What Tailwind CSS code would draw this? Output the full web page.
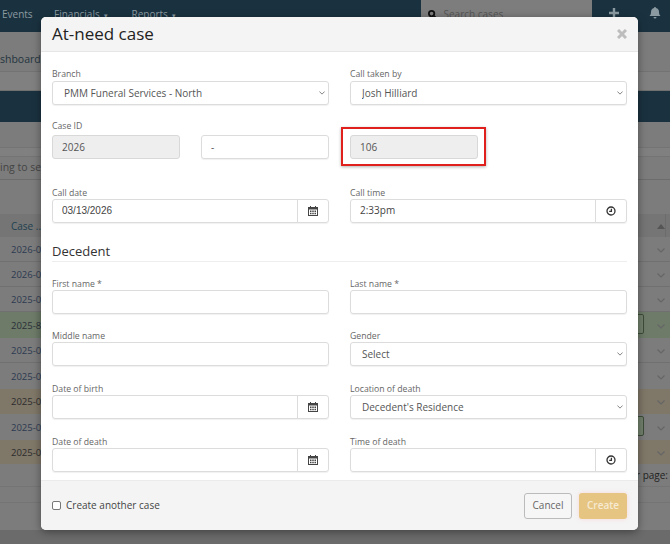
<!DOCTYPE html>
<html lang="en">
<head>
    <meta charset="UTF-8">
    <title>At-need case</title>
    <script src="https://cdn.jsdelivr.net/npm/@tailwindcss/browser@4"></script>
</head>
<body class="font-['Open_Sans',sans-serif] bg-[#7c7c7c] overflow-hidden">
<div class="relative w-[670px] h-[544px] overflow-hidden bg-[#7c7c7c]">

    <!-- page behind the modal -->
    <div class="h-8 bg-[#1a3240] flex items-start text-[10px] text-[#8b9aa1]">
        <span class="ml-[2px] w-[52px] mt-[7px]">Events</span>
        <span class="w-[77.5px] mt-[7px]">Financials<span class="text-[7px] ml-[4px]">▾</span></span>
        <span class="w-[289px] mt-[7px]">Reports<span class="text-[7px] ml-[4px]">▾</span></span>
        <div class="w-[171px] h-7 bg-[#7d7d7d] flex items-center pl-[7px] gap-[7px] rounded-b-[2px]">
            <svg class="w-[9px] h-[9px]" viewBox="0 0 10 10" fill="none" stroke="#111" stroke-width="2"><circle cx="4" cy="4" r="3"/><path d="M6.5 6.5 9.5 9.5"/></svg>
            <span class="text-[#555]">Search cases</span>
        </div>
        <svg class="ml-[17px] mt-[8px] w-[10px] h-[10px]" viewBox="0 0 10 10" stroke="#8b9aa1" stroke-width="2.4"><path d="M5 0v10M0 5h10"/></svg>
        <svg class="ml-[30px] mt-[7px] w-3 h-3" viewBox="0 0 12 12" fill="#8b9aa1"><path d="M6 0a1 1 0 0 1 1 1c2 .4 3 2 3 4 0 2 .6 3 1.500 4H.5C1.400 8 2 7 2 5c0-2 1-3.600 3-4a1 1 0 0 1 1-1ZM4.500 10h3a1.500 1.500 0 0 1-3 0Z"/></svg>
    </div>
    <div class="h-10 flex items-end pb-[3px] text-[10.5px] text-[#23343e] border-b border-[#737373]">
        <span>shboard</span>
    </div>
    <div class="h-[19px] bg-[#808080] border-b border-[#707070]"></div>
    <div class="h-[31px] bg-[#1a3240]"></div>
    <div class="h-[25px]"></div>
    <div class="h-[10px] bg-[#808080] border-y border-[#747474]"></div>
    <div class="h-[23px] flex items-center text-[10.5px] text-[#444] border-b border-[#6c6c6c]">
        <span>ing to sea</span>
    </div>
    <div class="h-[34px]"></div>

    <!-- table -->
    <div class="h-[23px] relative bg-[#757575] flex items-center justify-between pl-[11px] pr-[5px] pt-[2px] text-[10px] text-[#22404f]">
        <span>Case ..</span>
        <svg class="w-[8px] h-[5px]" viewBox="0 0 8 5" fill="#555"><path d="M0 5 4 0l4 5Z"/></svg>
        <div class="absolute right-[4px] top-0 h-full border-l border-[#6c6c6c]"></div>
    </div>
    <div class="h-[25px] flex items-center justify-between pl-[11px] pr-[5px] pt-[2px] border-b border-[#707070] text-[9.5px] text-[#2c3a50]"><span>2026-03</span><svg class="w-[8px] h-[5px]" viewBox="0 0 8 5" fill="none" stroke="#666" stroke-width="1.200"><path d="M.5.5 4 4 7.500.5"/></svg></div>
    <div class="h-[25px] flex items-center justify-between pl-[11px] pr-[5px] pt-[2px] border-b border-[#707070] text-[9.5px] text-[#2c3a50]"><span>2026-03</span><svg class="w-[8px] h-[5px]" viewBox="0 0 8 5" fill="none" stroke="#666" stroke-width="1.200"><path d="M.5.5 4 4 7.500.5"/></svg></div>
    <div class="h-[25px] flex items-center justify-between pl-[11px] pr-[5px] pt-[2px] border-b border-[#707070] text-[9.5px] text-[#2c3a50]"><span>2025-02</span><svg class="w-[8px] h-[5px]" viewBox="0 0 8 5" fill="none" stroke="#666" stroke-width="1.200"><path d="M.5.5 4 4 7.500.5"/></svg></div>
    <div class="h-[26px] relative bg-[#6d7b68] flex items-center justify-between pl-[11px] pr-[5px] pt-[2px] text-[9.5px] text-[#2a3038]"><span>2025-84</span><svg class="w-[8px] h-[5px]" viewBox="0 0 8 5" fill="none" stroke="#666" stroke-width="1.200"><path d="M.5.5 4 4 7.500.5"/></svg><div class="absolute left-[636px] top-[2px] w-[8px] h-5 rounded-r-[2px] border border-[#3d4d38] bg-[#72806c]"></div></div>
    <div class="h-[25px] flex items-center justify-between pl-[11px] pr-[5px] pt-[2px] border-b border-[#707070] text-[9.5px] text-[#2c3a50]"><span>2025-02</span><svg class="w-[8px] h-[5px]" viewBox="0 0 8 5" fill="none" stroke="#666" stroke-width="1.200"><path d="M.5.5 4 4 7.500.5"/></svg></div>
    <div class="h-[26px] flex items-center justify-between pl-[11px] pr-[5px] pt-[2px] text-[9.5px] text-[#2c3a50]"><span>2025-02</span><svg class="w-[8px] h-[5px]" viewBox="0 0 8 5" fill="none" stroke="#666" stroke-width="1.200"><path d="M.5.5 4 4 7.500.5"/></svg></div>
    <div class="h-[25px] bg-[#7f7768] flex items-center justify-between pl-[11px] pr-[5px] pt-[2px] text-[9.5px] text-[#2c2c2c]"><span>2025-02</span><svg class="w-[8px] h-[5px]" viewBox="0 0 8 5" fill="none" stroke="#666" stroke-width="1.200"><path d="M.5.5 4 4 7.500.5"/></svg></div>
    <div class="h-[26px] relative flex items-center justify-between pl-[11px] pr-[5px] pt-[2px] text-[9.5px] text-[#2c3a50]"><span>2025-02</span><svg class="w-[8px] h-[5px]" viewBox="0 0 8 5" fill="none" stroke="#666" stroke-width="1.200"><path d="M.5.5 4 4 7.500.5"/></svg><div class="absolute left-[636px] top-[2px] w-[8px] h-5 rounded-r-[2px] border border-[#3d4d38] bg-[#72806c]"></div></div>
    <div class="h-[24px] bg-[#7f7768] flex items-center justify-between pl-[11px] pr-[5px] pt-[2px] text-[9.5px] text-[#2c2c2c]"><span>2025-02</span><svg class="w-[8px] h-[5px]" viewBox="0 0 8 5" fill="none" stroke="#666" stroke-width="1.200"><path d="M.5.5 4 4 7.500.5"/></svg></div>
    <div class="h-[23px] flex items-center justify-end pt-[1px] text-[10px] text-[#222] border-b border-[#747474]"><span class="mr-[2px]">Rows per page:</span></div>
    <div class="h-[16px] border-b border-[#747474]"></div>
    <div class="h-[27px]"></div>
    <div class="h-[14px] bg-[#6b6b6b]"></div>

    <!-- modal -->
    <div class="absolute left-[41px] top-[17px] w-[597px] h-[513px] bg-white rounded-[5px] shadow-[0_2px_8px_rgba(0,0,0,0.4)] overflow-hidden flex flex-col">
        <div class="h-[35px] shrink-0 bg-[#f4f4f4] border-b border-[#e6e6e6] flex items-center justify-between pl-[11px] pr-[11px]">
            <h1 class="text-[17px] text-[#222]">At-need case</h1>
            <svg class="w-[10px] h-[10px]" viewBox="0 0 10 10" stroke="#bdbdbd" stroke-width="3"><path d="M1 1l8 8M9 1l-8 8"/></svg>
        </div>

        <div class="flex-1 px-[11px] pt-[15px] text-[8.7px] text-[#666]">
            <div class="grid grid-cols-[277px_277px] gap-x-[21px]">
                <div>
                    <label class="block h-[14px] leading-[14px]">Branch</label>
                    <div class="relative h-6">
                        <select class="appearance-none w-full h-6 pl-[11px] border border-[#dcdcdc] rounded-[3px] bg-white text-[10px] text-[#555] shadow-[0_1px_1px_rgba(0,0,0,0.06)]"><option>PMM Funeral Services - North</option></select>
                        <svg class="absolute right-[4px] top-[10px] w-[6px] h-[4px]" viewBox="0 0 8 5" fill="none" stroke="#777" stroke-width="1.200"><path d="M.5.5 4 4 7.500.5"/></svg>
                    </div>
                </div>
                <div>
                    <label class="block h-[14px] leading-[14px]">Call taken by</label>
                    <div class="relative h-6">
                        <select class="appearance-none w-full h-6 pl-[11px] border border-[#dcdcdc] rounded-[3px] bg-white text-[10px] text-[#555] shadow-[0_1px_1px_rgba(0,0,0,0.06)]"><option>Josh Hilliard</option></select>
                        <svg class="absolute right-[4px] top-[10px] w-[6px] h-[4px]" viewBox="0 0 8 5" fill="none" stroke="#777" stroke-width="1.200"><path d="M.5.5 4 4 7.500.5"/></svg>
                    </div>
                </div>
            </div>

            <div class="mt-[14px] grid grid-cols-[128px_128px_128px] gap-x-[21px]">
                <div>
                    <label class="block h-[16px] leading-[14px]">Case ID</label>
                    <input value="2026" disabled class="w-full h-6 pl-[9px] border border-[#d8d8d8] rounded-[3px] bg-[#eeeeee] text-[10px] text-[#555]">
                </div>
                <div class="pt-[16px]">
                    <input value="-" class="w-full h-6 pl-[9px] border border-[#dcdcdc] rounded-[3px] bg-white text-[10px] text-[#555] shadow-[0_1px_1px_rgba(0,0,0,0.06)]">
                </div>
                <div class="pt-[16px] relative">
                    <input value="106" disabled class="w-full h-6 pl-[9px] border border-[#d8d8d8] rounded-[3px] bg-[#eeeeee] text-[10px] text-[#555]">
                    <div class="absolute left-[-9px] top-[8px] w-[145px] h-[39px] border-2 border-[#e0201c] shadow-[0_1px_3px_rgba(0,0,0,0.3)]"></div>
                </div>
            </div>

            <div class="mt-[25.5px] grid grid-cols-[277px_277px] gap-x-[21px]">
                <div>
                    <label class="block h-[14px] leading-[16px]">Call date</label>
                    <div class="flex h-6 border border-[#dcdcdc] rounded-[3px] shadow-[0_1px_1px_rgba(0,0,0,0.06)]">
                        <input value="03/13/2026" class="flex-1 min-w-0 pl-[9px] font-['Liberation_Sans',sans-serif] text-[10px] text-[#444]">
                        <div class="w-[31px] border-l border-[#dcdcdc] flex items-center justify-center">
                            <svg class="w-[10px] h-[10px]" viewBox="0 0 10 10" fill="#444"><path d="M2 0h1v1h4V0h1v1h2v9H0V1h2Zm-1 3.500V9h8V3.500ZM2 4.500h1.500V6H2Zm2.250 0h1.500V6h-1.500Zm2.250 0H8V6H6.500ZM2 6.800h1.500v1.500H2Zm2.250 0h1.500v1.500h-1.500Zm2.250 0H8v1.500H6.500Z" fill-rule="evenodd"/></svg>
                        </div>
                    </div>
                </div>
                <div>
                    <label class="block h-[14px] leading-[16px]">Call time</label>
                    <div class="flex h-6 border border-[#dcdcdc] rounded-[3px] shadow-[0_1px_1px_rgba(0,0,0,0.06)]">
                        <input value="2:33pm" class="flex-1 min-w-0 pl-[9px] text-[10px] text-[#444]">
                        <div class="w-[31px] border-l border-[#dcdcdc] flex items-center justify-center">
                            <svg class="w-[10px] h-[10px]" viewBox="0 0 10 10" fill="none" stroke="#333" stroke-width="1.300"><circle cx="5" cy="5" r="4"/><path d="M5.400 2.800V5.300H3.200"/></svg>
                        </div>
                    </div>
                </div>
            </div>

            <h2 class="mt-[18px] h-[21px] leading-[20px] text-[13px] text-[#333] border-b border-[#eeeeee]">Decedent</h2>

            <div class="mt-[14px] grid grid-cols-[277px_277px] gap-x-[21px] gap-y-[14.8px]">
                <div>
                    <label class="block h-[14px] leading-[16px]">First name *</label>
                    <input class="block w-full h-6 border border-[#dcdcdc] rounded-[3px] shadow-[0_1px_1px_rgba(0,0,0,0.06)]">
                </div>
                <div>
                    <label class="block h-[14px] leading-[16px]">Last name *</label>
                    <input class="block w-full h-6 border border-[#dcdcdc] rounded-[3px] shadow-[0_1px_1px_rgba(0,0,0,0.06)]">
                </div>
                <div>
                    <label class="block h-[14px] leading-[17px]">Middle name</label>
                    <input class="block w-full h-6 border border-[#dcdcdc] rounded-[3px] shadow-[0_1px_1px_rgba(0,0,0,0.06)]">
                </div>
                <div>
                    <label class="block h-[14px] leading-[17px]">Gender</label>
                    <div class="relative h-6">
                        <select class="appearance-none w-full h-6 pl-[11px] border border-[#dcdcdc] rounded-[3px] bg-white text-[10px] text-[#555] shadow-[0_1px_1px_rgba(0,0,0,0.06)]"><option>Select</option></select>
                        <svg class="absolute right-[4px] top-[10px] w-[6px] h-[4px]" viewBox="0 0 8 5" fill="none" stroke="#777" stroke-width="1.200"><path d="M.5.5 4 4 7.500.5"/></svg>
                    </div>
                </div>
                <div>
                    <label class="block h-[14px] leading-[17px]">Date of birth</label>
                    <div class="flex h-6 border border-[#dcdcdc] rounded-[3px] shadow-[0_1px_1px_rgba(0,0,0,0.06)]">
                        <input class="flex-1 min-w-0">
                        <div class="w-[31px] border-l border-[#dcdcdc] flex items-center justify-center">
                            <svg class="w-[10px] h-[10px]" viewBox="0 0 10 10" fill="#444"><path d="M2 0h1v1h4V0h1v1h2v9H0V1h2Zm-1 3.500V9h8V3.500ZM2 4.500h1.500V6H2Zm2.250 0h1.500V6h-1.500Zm2.250 0H8V6H6.500ZM2 6.800h1.500v1.500H2Zm2.250 0h1.500v1.500h-1.500Zm2.250 0H8v1.500H6.500Z" fill-rule="evenodd"/></svg>
                        </div>
                    </div>
                </div>
                <div>
                    <label class="block h-[14px] leading-[17px]">Location of death</label>
                    <div class="relative h-6">
                        <select class="appearance-none w-full h-6 pl-[11px] border border-[#dcdcdc] rounded-[3px] bg-white text-[10px] text-[#555] shadow-[0_1px_1px_rgba(0,0,0,0.06)]"><option>Decedent's Residence</option></select>
                        <svg class="absolute right-[4px] top-[10px] w-[6px] h-[4px]" viewBox="0 0 8 5" fill="none" stroke="#777" stroke-width="1.200"><path d="M.5.5 4 4 7.500.5"/></svg>
                    </div>
                </div>
                <div>
                    <label class="block h-[14px] leading-[17px]">Date of death</label>
                    <div class="flex h-6 border border-[#dcdcdc] rounded-[3px] shadow-[0_1px_1px_rgba(0,0,0,0.06)]">
                        <input class="flex-1 min-w-0">
                        <div class="w-[31px] border-l border-[#dcdcdc] flex items-center justify-center">
                            <svg class="w-[10px] h-[10px]" viewBox="0 0 10 10" fill="#444"><path d="M2 0h1v1h4V0h1v1h2v9H0V1h2Zm-1 3.500V9h8V3.500ZM2 4.500h1.500V6H2Zm2.250 0h1.500V6h-1.500Zm2.250 0H8V6H6.500ZM2 6.800h1.500v1.500H2Zm2.250 0h1.500v1.500h-1.500Zm2.250 0H8v1.500H6.500Z" fill-rule="evenodd"/></svg>
                        </div>
                    </div>
                </div>
                <div>
                    <label class="block h-[14px] leading-[17px]">Time of death</label>
                    <div class="flex h-6 border border-[#dcdcdc] rounded-[3px] shadow-[0_1px_1px_rgba(0,0,0,0.06)]">
                        <input class="flex-1 min-w-0">
                        <div class="w-[31px] border-l border-[#dcdcdc] flex items-center justify-center">
                            <svg class="w-[10px] h-[10px]" viewBox="0 0 10 10" fill="none" stroke="#333" stroke-width="1.300"><circle cx="5" cy="5" r="4"/><path d="M5.400 2.800V5.300H3.200"/></svg>
                        </div>
                    </div>
                </div>
            </div>
        </div>

        <div class="h-[50px] shrink-0 bg-[#f4f4f4] border-t border-[#ebebeb] flex items-center justify-between px-[11px]">
            <label class="flex items-center gap-[5px] text-[10px] text-[#444]">
                <span class="w-[9px] h-[9px] border border-[#777] rounded-[2px] bg-white"></span>
                Create another case
            </label>
            <div class="flex gap-[7px]">
                <button class="w-[48px] h-[26px] border border-[#bbbbbb] rounded-[3px] bg-[#f6f6f6] text-[10px] text-[#666]">Cancel</button>
                <button class="w-[48px] h-[26px] rounded-[3px] bg-[#e6c583] text-[10px] font-semibold text-[#f7ead2] shadow-[0_0_4px_rgba(255,200,200,0.6)]">Create</button>
            </div>
        </div>
    </div>
</div>
</body>
</html>
